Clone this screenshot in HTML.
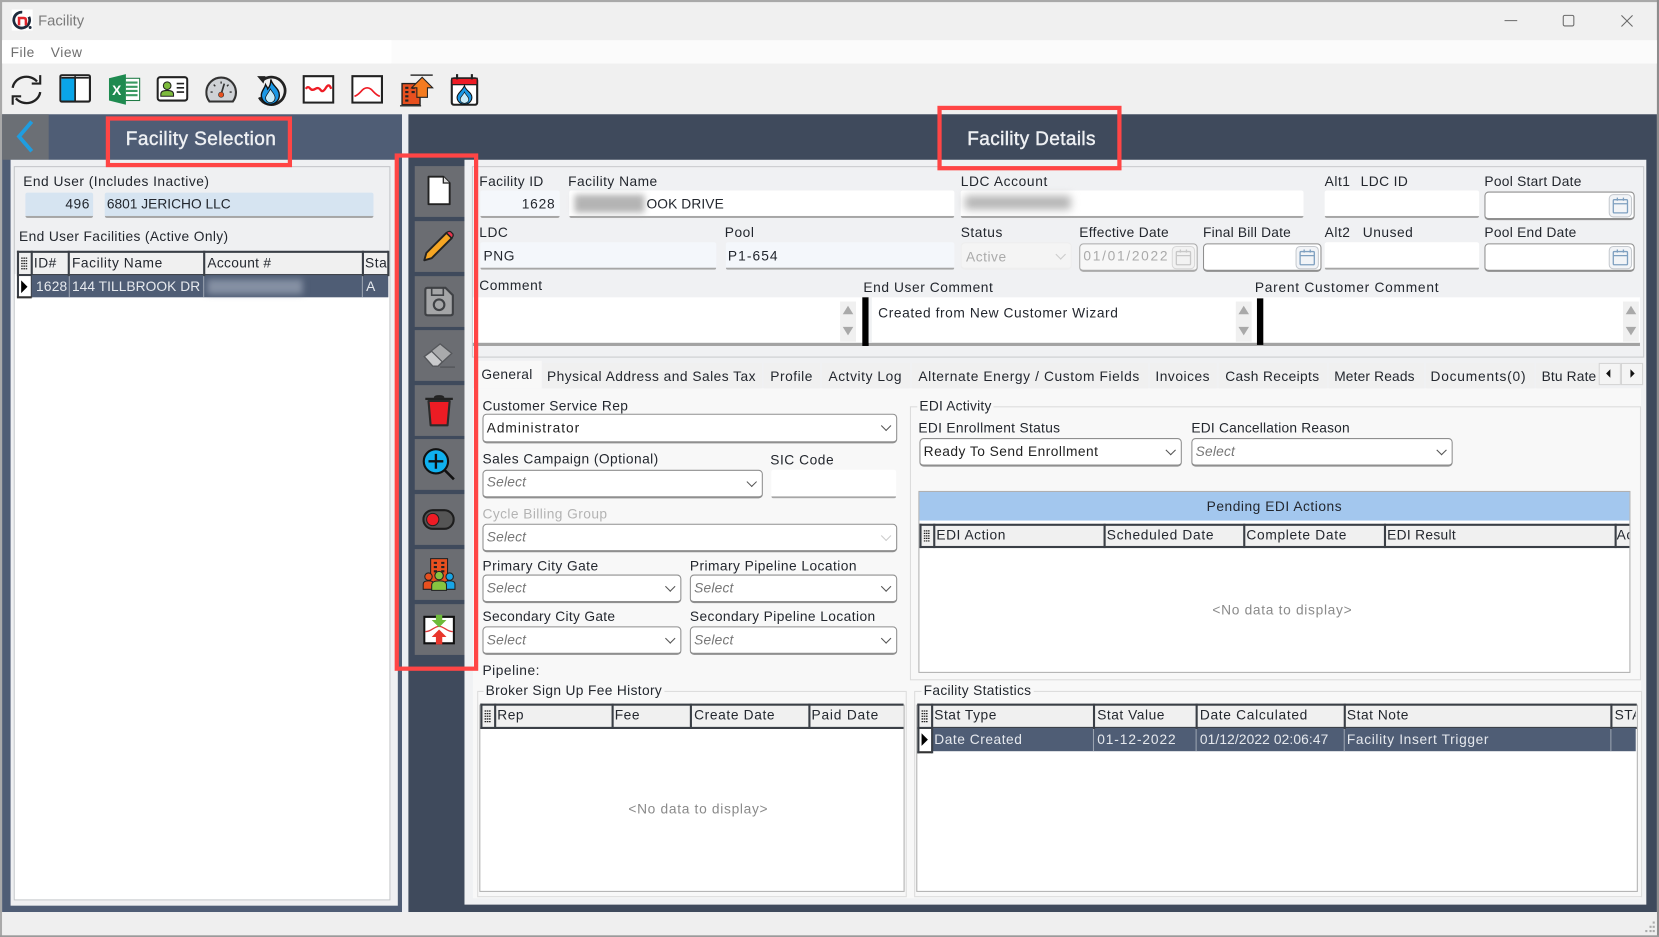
<!DOCTYPE html>
<html><head><meta charset="utf-8"><title>Facility</title>
<style>
html,body{margin:0;padding:0;width:1659px;height:937px;overflow:hidden;background:#f0f0f0}
#r{position:absolute;left:0;top:0;width:1568px;height:886px;overflow:hidden;transform:scale(1.05804);transform-origin:0 0;font:13px/14px "Liberation Sans",sans-serif;letter-spacing:.5px;color:#23272e;background:#f0f0f0}
#r div,#r span,#r svg{position:absolute}
span{white-space:nowrap}
.f{background:#fff;border-bottom:2px solid #a6a6a6;border-radius:2px;box-sizing:border-box}
.b{background:#f4f7fb}
.s{background:#fff;border:1px solid #8f8f8f;border-bottom-width:2px;border-radius:4px;box-sizing:border-box}
.s:after{content:"";position:absolute;right:6px;top:7px;width:6px;height:6px;border-right:1.4px solid #555;border-bottom:1.4px solid #555;transform:rotate(45deg)}
.dis:after{border-color:#ccc}
.d{background:#fff;border:1px solid #8f8f8f;border-bottom-width:2px;border-radius:4px;box-sizing:border-box}
.sel{font-style:italic;color:#777;letter-spacing:.2px}
.hd{background:#f0f0f0;border-top:2px solid #3a3f46;border-bottom:2px solid #3a3f46;box-sizing:border-box}
.v{width:2px;background:#3a3f46}
.vl{width:1px;background:#9aa3b0}
.g{border:1px solid #b0b0b0;box-sizing:border-box;background:#fff}
.gb{border:1px solid #dcdcdc;box-sizing:border-box}
.lg{background:#f8f8f8;padding:0 2px}
.rw{background:#4f5d75}
.w{color:#e6e9ee}
.nd{color:#8a8a8a;letter-spacing:.65px}
.tab{background:#f0f0f0;top:343px;height:24px}
.red{border:4.5px solid #ff4545;box-sizing:border-box}
.btn{left:392px;width:47px;height:48px;background:#6b6d72}
.blur{filter:blur(3px);background:#9a9a9a}
</style></head><body>
<svg width="0" height="0" style="position:absolute"><defs>
<symbol id="cal" viewBox="0 0 24 24"><rect x="1" y="1" width="22" height="22" rx="4" fill="#f2f4f7" stroke="#c4c8cd"/><rect x="5" y="6" width="14" height="13" rx="1" fill="none" stroke="#7fa0c0" stroke-width="1.3"/><path d="M5 10H19M9 4V7M15 4V7" stroke="#7fa0c0" stroke-width="1.3"/></symbol>
<symbol id="cald" viewBox="0 0 24 24"><rect x="1" y="1" width="22" height="22" rx="4" fill="#f2f2f2" stroke="#d8d8d8"/><rect x="5" y="6" width="14" height="13" rx="1" fill="none" stroke="#c8c8c8" stroke-width="1.3"/><path d="M5 10H19M9 4V7M15 4V7" stroke="#c8c8c8" stroke-width="1.3"/></symbol>
<symbol id="gh" viewBox="0 0 12 20"><path d="M3 5H9M3 7.5H9M3 10H9M3 12.5H9M3 15H9" stroke="#222" stroke-width="1.2" stroke-dasharray="1.5 .6"/></symbol>
</defs></svg>
<div id="r">
<!-- window chrome -->
<div style="left:0;top:0;width:1568px;height:2px;background:#a9a9a9"></div>
<div style="left:0;top:0;width:2px;height:886px;background:#a9a9a9"></div>
<div style="left:1566px;top:0;width:2px;height:886px;background:#8d8d8d"></div>
<svg style="left:11px;top:9px" width="20" height="20" viewBox="0 0 20 20"><rect width="20" height="20" fill="#fff"/><circle cx="9.5" cy="10" r="7.5" fill="none" stroke="#1d2a3c" stroke-width="2.6" stroke-dasharray="33 8" transform="rotate(20 9.5 10)"/><path d="M7 15V8H11.5Q13.500 8 13.500 10V15" fill="none" stroke="#e0262e" stroke-width="2.400"/><circle cx="17.500" cy="17" r="1.400" fill="#1d2a3c"/></svg>
<span style="left:36px;top:12px;font-size:14px;color:#7a7a7a;letter-spacing:0">Facility</span>
<svg style="left:1420px;top:12px" width="126" height="16" viewBox="0 0 126 16" fill="none" stroke="#6a6a6a" stroke-width="1"><path d="M2 7.5H14"/><rect x="57.5" y="2.5" width="10" height="10" rx="1.5"/><path d="M112.5 2.5L123 13M123 2.5L112.5 13"/></svg>
<div style="left:2px;top:38px;width:1564px;height:22px;background:#fbfbfb"></div>
<div style="left:2px;top:38px;width:368px;height:22px;background:#fff"></div>
<span style="left:10px;top:43px;color:#6e6e6e">File</span><span style="left:48px;top:43px;color:#6e6e6e">View</span>

<!-- toolbar icons -->
<svg style="left:9px;top:69px" width="32" height="32" viewBox="0 0 32 32" fill="none" stroke="#222" stroke-width="2.2"><path d="M3 14A13 12 0 0 1 26 8"/><path d="M29 2V10H21" stroke-width="2"/><path d="M29 18A13 12 0 0 1 6 24"/><path d="M3 30V22H11" stroke-width="2"/></svg>
<svg style="left:56px;top:70px" width="30" height="28" viewBox="0 0 30 28"><rect x="1" y="1" width="28" height="25" rx="1.5" fill="#fff" stroke="#222" stroke-width="2"/><rect x="2" y="4" width="13" height="21" fill="#0aa5e8"/><path d="M15 2V25M2 3.5H28" stroke="#222" stroke-width="1.6"/></svg>
<svg style="left:102px;top:69px" width="31" height="31" viewBox="0 0 31 31"><rect x="13" y="5" width="17" height="21" fill="#fff" stroke="#1f7a45"/><path d="M17 9H28M17 13H28M17 17H28M17 21H28" stroke="#3a9a62" stroke-width="2"/><path d="M1 5L17 1V30L1 26Z" fill="#1f8a50"/><text x="4" y="21" font-family="Liberation Sans" font-size="13" font-weight="700" fill="#fff">X</text></svg>
<svg style="left:148px;top:71px" width="30" height="26" viewBox="0 0 30 26"><rect x="1" y="2" width="28" height="22" rx="2.5" fill="#fff" stroke="#222" stroke-width="2"/><circle cx="10" cy="10" r="3.6" fill="#7dbb3c" stroke="#222"/><path d="M4 20V18Q4 14.500 10 14.500T16 18V20Z" fill="#7dbb3c" stroke="#222"/><path d="M19 8H26M19 12H26M19 16H26" stroke="#222" stroke-width="1.6"/></svg>
<svg style="left:194px;top:71px" width="30" height="26" viewBox="0 0 30 26"><path d="M4 25A14 14 0 1 1 26 25Z" fill="#cfd2d6" stroke="#333" stroke-width="2"/><path d="M5 16H7M8 9L9.500 10.500M15 6V8M22 9L20.500 10.500M25 16H23" stroke="#333" stroke-width="1.3"/><path d="M15 18L18 8" stroke="#333" stroke-width="1.6"/><circle cx="15" cy="18.500" r="2.500" fill="#e8501f" stroke="#333" stroke-width=".6"/></svg>
<svg style="left:240px;top:69px" width="31" height="32" viewBox="0 0 31 32"><path d="M8 7A13 13 0 1 1 5 23" fill="none" stroke="#222" stroke-width="2.600"/><path d="M3 3L11 3L9 10Z" fill="#222"/><path d="M16 6C17 12 24 14 24 21A8.500 8.500 0 0 1 7 21C7 17 10 15 11 11C12 13 13 14 13 15C15 13 16 10 16 6Z" fill="#1a98e6" stroke="#111" stroke-width="1.300"/><path d="M15.500 15C17 18 20 20 20 23.500A4.500 4.500 0 0 1 11 23.500C11 21 14 19 15.500 15Z" fill="#c8ecfa" stroke="#111" stroke-width=".7"/></svg>
<svg style="left:286px;top:70px" width="30" height="28" viewBox="0 0 30 28"><rect x="1" y="2" width="28" height="25" fill="#fff" stroke="#222" stroke-width="2"/><path d="M3 14Q5 11 7 13.500T12 14T17 15T22 13T27 14" fill="none" stroke="#ee1c25" stroke-width="2.200"/></svg>
<svg style="left:332px;top:70px" width="30" height="28" viewBox="0 0 30 28"><rect x="1" y="2" width="28" height="25" fill="#fff" stroke="#222" stroke-width="2"/><path d="M3 21C9 19 10 13 15 13S21 19 27 21" fill="none" stroke="#ee1c25" stroke-width="1.600"/></svg>
<svg style="left:378px;top:69px" width="32" height="32" viewBox="0 0 32 32"><path d="M10 2H31" stroke="#333" stroke-width="1.400"/><rect x="2" y="10" width="17" height="20" fill="#e8501f" stroke="#222" stroke-width="1.300"/><path d="M5 14H8M11 14H14M5 18H8M11 18H14M5 22H8M5 26H8" stroke="#222" stroke-width="2"/><path d="M21 4L31 14H26V23H16V14H11Z" fill="#f47b20" stroke="#222"/><path d="M0 31H20" stroke="#333" stroke-width="1.300"/></svg>
<svg style="left:425px;top:69px" width="28" height="32" viewBox="0 0 28 32"><rect x="2" y="5" width="24" height="25" rx="2" fill="#fff" stroke="#222" stroke-width="2"/><rect x="2" y="5" width="24" height="6" fill="#ee1c25" stroke="#222" stroke-width="1.200"/><path d="M7 1V6M21 1V6" stroke="#222" stroke-width="2"/><path d="M14 12C15 17 21 18 21 23A7 6.500 0 0 1 7 23C7 19 12 17 14 12Z" fill="#1a98e6" stroke="#111"/><path d="M14 18C15 21 18 22 18 25A4 3.600 0 0 1 10 25C10 22 13 21 14 18Z" fill="#c8ecfa" stroke="#111" stroke-width=".6"/></svg>

<!-- backgrounds -->
<div style="left:2px;top:108px;width:378px;height:754px;background:#4f5d75"></div>
<div style="left:2px;top:108px;width:44px;height:43px;background:#6b6f75"></div>
<svg style="left:14px;top:112px" width="20" height="34" viewBox="0 0 20 34"><path d="M16 3L4 17L16 31" fill="none" stroke="#1f9de0" stroke-width="3.600"/></svg>
<div style="left:380px;top:108px;width:6px;height:754px;background:#eceef2"></div>
<div style="left:386px;top:108px;width:1180px;height:754px;background:#3f4a5c"></div>
<span style="left:90px;top:120px;width:200px;text-align:center;font-size:18px;line-height:22px;letter-spacing:.4px;color:#eef0f3;-webkit-text-stroke:.4px #eef0f3">Facility Selection</span>
<span style="left:875px;top:120px;width:200px;text-align:center;font-size:18px;line-height:22px;letter-spacing:.35px;color:#eef0f3;-webkit-text-stroke:.4px #eef0f3">Facility Details</span>

<!-- left panel -->
<div style="left:10px;top:151px;width:366px;height:705px;background:#eff0f2"></div>
<div style="left:13px;top:157px;width:356px;height:694px;border:1px solid #c4c6c9;box-sizing:border-box"></div>
<span style="left:22px;top:165px;letter-spacing:.45px">End User (Includes Inactive)</span>
<div class="f" style="left:24px;top:182px;width:64px;height:24px;background:#d6e4f1"></div><span style="left:24px;top:186px;width:61px;text-align:right">496</span>
<div class="f" style="left:99px;top:182px;width:254px;height:24px;background:#d6e4f1"></div><span style="left:101px;top:186px;letter-spacing:0">6801 JERICHO LLC</span>
<span style="left:18px;top:217px;letter-spacing:.35px">End User Facilities (Active Only)</span>
<div style="left:14px;top:259px;width:354px;height:591px;background:#fff"></div>
<div class="hd" style="left:16px;top:237px;width:351px;height:24px"></div>
<div class="v" style="left:16px;top:237px;height:44px"></div><div class="v" style="left:29px;top:237px;height:44px"></div>
<svg style="left:17px;top:239px" width="12" height="20"><use href="#gh"/></svg>
<div class="rw" style="left:30px;top:260px;width:337px;height:21px"></div>
<div style="left:18px;top:261px;width:11px;height:20px;background:#fff"></div>
<svg style="left:19px;top:264px" width="8" height="14"><path d="M1 1L7 7L1 13Z" fill="#000"/></svg>
<div style="left:16px;top:280px;width:14px;height:2px;background:#333"></div>
<div class="v" style="left:64px;top:237px;height:24px"></div><div class="v" style="left:192px;top:237px;height:24px"></div><div class="v" style="left:342px;top:237px;height:24px"></div>
<div class="v" style="left:366px;top:237px;height:24px"></div>
<div class="vl" style="left:65px;top:261px;height:20px"></div><div class="vl" style="left:192px;top:261px;height:20px"></div><div class="vl" style="left:342px;top:261px;height:20px"></div>
<span style="left:32px;top:242px">ID#</span><span style="left:68px;top:242px;letter-spacing:.55px">Facility Name</span><span style="left:196px;top:242px;letter-spacing:.3px">Account #</span><span style="left:345px;top:242px">Sta</span>
<span class="w" style="left:34px;top:264px;letter-spacing:.2px">1628</span>
<span class="w" style="left:68px;top:264px;width:122px;overflow:hidden;letter-spacing:.05px">144 TILLBROOK DRIVE</span>
<div style="left:196px;top:264px;width:90px;height:14px;background:#8590a3;filter:blur(3px)"></div>
<span class="w" style="left:346px;top:264px">A</span>

<!-- side strip -->
<div class="btn" style="top:157px"></div><div class="btn" style="top:209px"></div><div class="btn" style="top:261px"></div><div class="btn" style="top:312px"></div><div class="btn" style="top:364px"></div><div class="btn" style="top:415px"></div><div class="btn" style="top:467px"></div><div class="btn" style="top:519px"></div><div class="btn" style="top:571px"></div>
<svg style="left:402px;top:165px" width="26" height="30" viewBox="0 0 26 30"><path d="M3 2H17L23 8V28H3Z" fill="#fff" stroke="#222" stroke-width="1.800" stroke-linejoin="round"/><path d="M17 2V8H23" fill="#ddd" stroke="#222" stroke-width="1.200"/></svg>
<svg style="left:399px;top:216px" width="32" height="32" viewBox="0 0 32 32"><path d="M23 4L28 9L9 28L2 30L4 23Z" fill="#f6a623" stroke="#222" stroke-width="1.800" stroke-linejoin="round"/><path d="M23 4Q25 2 27 3L29 5Q30 7 28 9Z" fill="#e8344e" stroke="#222" stroke-width="1.200"/></svg>
<svg style="left:400px;top:270px" width="30" height="30" viewBox="0 0 30 30"><path d="M2 4Q2 2 4 2H21L28 9V26Q28 28 26 28H4Q2 28 2 26Z" fill="#a4a5a7" stroke="#3f4145" stroke-width="2"/><path d="M8 2V9H19V2" fill="none" stroke="#3f4145" stroke-width="1.500"/><circle cx="15" cy="18" r="5" fill="none" stroke="#3f4145" stroke-width="2"/></svg>
<svg style="left:399px;top:322px" width="32" height="28" viewBox="0 0 32 28"><path d="M2 15L17 3L28 12L15 24H10Z" fill="#a9aaac" stroke="#55575b" stroke-width="1.200"/><path d="M2 15L10 24H15L19 20L9 10Z" fill="#c9cacc" stroke="#55575b" stroke-width="1.200"/><path d="M17 25H31" stroke="#55575b" stroke-width="1.500"/></svg>
<svg style="left:401px;top:372px" width="28" height="32" viewBox="0 0 28 32"><path d="M1 5H27" stroke="#222" stroke-width="2.200"/><path d="M9 4Q9 1.500 14 1.500T19 4" fill="#222"/><path d="M4 7H24L22 30H6Z" fill="#ed1c24" stroke="#2b2b2b" stroke-width="2" stroke-linejoin="round"/></svg>
<svg style="left:399px;top:423px" width="32" height="32" viewBox="0 0 32 32"><path d="M20 20L30 30" stroke="#111" stroke-width="2.400"/><circle cx="13" cy="13" r="11.500" fill="#0fb0ee" stroke="#111" stroke-width="2"/><path d="M13 6V20M6 13H20" stroke="#111" stroke-width="2.200"/></svg>
<svg style="left:399px;top:481px" width="31" height="20" viewBox="0 0 31 20"><rect x="1.200" y="1.200" width="28.600" height="17.600" rx="8.800" fill="#555" stroke="#1d1d1d" stroke-width="2"/><circle cx="10" cy="10" r="5.800" fill="#ee1c25" stroke="#222"/></svg>
<svg style="left:399px;top:527px" width="32" height="33" viewBox="0 0 32 33"><rect x="8" y="1" width="16" height="24" fill="#e8501f" stroke="#222"/><path d="M11 5H14M18 5H21M11 9H14M18 9H21M11 13H14M18 13H21" stroke="#222" stroke-width="2"/><circle cx="6" cy="18" r="3.500" fill="#e8501f" stroke="#222"/><path d="M1 30V25Q1 22 6 22T11 25V30Z" fill="#e8501f" stroke="#222"/><circle cx="26" cy="18" r="3.500" fill="#18a5e6" stroke="#222"/><path d="M21 30V25Q21 22 26 22T31 25V30Z" fill="#18a5e6" stroke="#222"/><circle cx="16" cy="17" r="4" fill="#86c440" stroke="#222"/><path d="M9 31V26Q9 22 16 22T23 26V31Z" fill="#86c440" stroke="#222"/></svg>
<svg style="left:400px;top:580px" width="30" height="30" viewBox="0 0 30 30"><rect x="1" y="3" width="28" height="25" fill="#fff" stroke="#111" stroke-width="2"/><path d="M2 17C8 17 10 12 15 12S22 17 28 17" fill="none" stroke="#e03a3a" stroke-width="1.200"/><path d="M12 1H18V6H22L15 13L8 6H12Z" fill="#6ebb3a"/><path d="M15 15L22 22H18V29H12V22H8Z" fill="#e8362c"/></svg>

<!-- right panel -->
<div style="left:439px;top:151px;width:1117px;height:704px;background:#f0f1f3"></div>
<div style="left:446px;top:157px;width:1108px;height:181px;border:1px solid #c9cbce;box-sizing:border-box"></div>
<span style="left:453px;top:165px;letter-spacing:.35px">Facility ID</span><span style="left:537px;top:165px;letter-spacing:.45px">Facility Name</span><span style="left:908px;top:165px;letter-spacing:.6px">LDC Account</span><span style="left:1252px;top:165px">Alt1</span><span style="left:1286px;top:165px;letter-spacing:.4px">LDC ID</span><span style="left:1403px;top:165px;letter-spacing:.25px">Pool Start Date</span>
<div class="f b" style="left:454px;top:180px;width:75px;height:26px"></div><span style="left:454px;top:186px;width:71px;text-align:right;letter-spacing:.75px">1628</span>
<div class="f" style="left:538px;top:180px;width:364px;height:26px"></div>
<div class="blur" style="left:543px;top:184px;width:66px;height:17px;background:#b4b4b4"></div><span style="left:611px;top:186px;letter-spacing:.1px">OOK DRIVE</span>
<div class="f" style="left:908px;top:180px;width:324px;height:26px"></div><div class="blur" style="left:912px;top:185px;width:100px;height:13px;background:#b4b4b4;filter:blur(4px)"></div>
<div class="f" style="left:1252px;top:180px;width:146px;height:26px"></div>
<div class="d" style="left:1403px;top:181px;width:142px;height:27px"></div><svg style="left:1520px;top:183px" width="23" height="23"><use href="#cal"/></svg>

<span style="left:453px;top:213px">LDC</span><span style="left:685px;top:213px">Pool</span><span style="left:908px;top:213px">Status</span><span style="left:1020px;top:213px;letter-spacing:.3px">Effective Date</span><span style="left:1137px;top:213px;letter-spacing:.2px">Final Bill Date</span><span style="left:1252px;top:213px">Alt2</span><span style="left:1288px;top:213px">Unused</span><span style="left:1403px;top:213px;letter-spacing:.25px">Pool End Date</span>
<div class="f b" style="left:454px;top:229px;width:223px;height:26px"></div><span style="left:457px;top:235px">PNG</span>
<div class="f b" style="left:686px;top:229px;width:216px;height:26px"></div><span style="left:688px;top:235px;letter-spacing:1px">P1-654</span>
<div class="s dis" style="left:908px;top:229px;width:105px;height:26px;background:#f4f4f4;border-color:#eee"></div><span style="left:913px;top:236px;color:#aaa">Active</span>
<div class="d" style="left:1020px;top:230px;width:112px;height:27px;background:#f7f7f7;border-color:#aaa"></div><span style="left:1024px;top:235px;color:#aaa;letter-spacing:1.600px">01/01/2022</span><svg style="left:1107px;top:232px" width="23" height="23"><use href="#cald"/></svg>
<div class="d" style="left:1137px;top:230px;width:112px;height:27px"></div><svg style="left:1224px;top:232px" width="23" height="23"><use href="#cal"/></svg>
<div class="f" style="left:1252px;top:229px;width:146px;height:26px"></div>
<div class="d" style="left:1403px;top:230px;width:142px;height:27px"></div><svg style="left:1520px;top:232px" width="23" height="23"><use href="#cal"/></svg>

<span style="left:453px;top:263px">Comment</span><span style="left:816px;top:265px;letter-spacing:.55px">End User Comment</span><span style="left:1186px;top:265px;letter-spacing:.7px">Parent Customer Comment</span>
<div style="left:447px;top:281px;width:1103px;height:43px;background:#fff"></div>
<div style="left:447px;top:324px;width:1103px;height:3px;background:#a3a3a3"></div>
<div style="left:794px;top:285px;width:15px;height:38px;background:#f0f0f0"></div>
<div style="left:1168px;top:285px;width:15px;height:38px;background:#f0f0f0"></div>
<div style="left:1534px;top:285px;width:15px;height:38px;background:#f0f0f0"></div>
<div style="left:815px;top:281px;width:6px;height:46px;background:#000"></div>
<div style="left:1188px;top:282px;width:6px;height:44px;background:#000"></div>
<div style="left:821px;top:281px;width:3px;height:43px;background:#f0f1f3"></div>
<svg style="left:796px;top:288px" width="11" height="30" fill="#a9a9a9"><path d="M5.500 1L10.500 9H.5ZM.5 21H10.500L5.500 29Z"/></svg>
<svg style="left:1170px;top:288px" width="11" height="30" fill="#a9a9a9"><path d="M5.500 1L10.500 9H.5ZM.5 21H10.500L5.500 29Z"/></svg>
<svg style="left:1536px;top:288px" width="11" height="30" fill="#a9a9a9"><path d="M5.500 1L10.500 9H.5ZM.5 21H10.500L5.500 29Z"/></svg>
<span style="left:830px;top:289px;letter-spacing:.55px">Created from New Customer Wizard</span>

<!-- tabs -->
<div style="left:447px;top:367px;width:1104px;height:482px;background:#f8f8f8"></div>
<div style="left:451px;top:341px;width:61px;height:26px;background:#f8f8f8"></div>
<span style="left:455px;top:347px;letter-spacing:.3px">General</span>
<div class="tab" style="left:513px;width:207px"></div><div class="tab" style="left:722px;width:53px"></div><div class="tab" style="left:777px;width:83px"></div><div class="tab" style="left:862px;width:223px"></div><div class="tab" style="left:1087px;width:63px"></div><div class="tab" style="left:1152px;width:102px"></div><div class="tab" style="left:1256px;width:90px"></div><div class="tab" style="left:1348px;width:102px"></div><div class="tab" style="left:1452px;width:60px"></div>
<span style="left:517px;top:349px;letter-spacing:.45px">Physical Address and Sales Tax</span><span style="left:728px;top:349px">Profile</span><span style="left:783px;top:349px;letter-spacing:.55px">Actvity Log</span><span style="left:868px;top:349px;letter-spacing:.58px">Alternate Energy / Custom Fields</span><span style="left:1092px;top:349px">Invoices</span><span style="left:1158px;top:349px;letter-spacing:.35px">Cash Receipts</span><span style="left:1261px;top:349px;letter-spacing:.15px">Meter Reads</span><span style="left:1352px;top:349px;letter-spacing:.75px">Documents(0)</span><span style="left:1457px;top:349px;letter-spacing:.15px">Btu Rate</span>
<div style="left:1511px;top:343px;width:21px;height:21px;background:#f4f4f4;border:1px solid #d4d4d4;box-sizing:border-box"></div>
<div style="left:1532px;top:343px;width:21px;height:21px;background:#f4f4f4;border:1px solid #d4d4d4;box-sizing:border-box"></div>
<svg style="left:1517px;top:348px" width="30" height="10"><path d="M5 1V9L1 5ZM24 1V9L28 5Z" fill="#111"/></svg>

<!-- general left -->
<span style="left:456px;top:377px;letter-spacing:.35px">Customer Service Rep</span>
<div class="s" style="left:456px;top:391px;width:392px;height:28px"></div><span style="left:460px;top:398px;color:#222;letter-spacing:.9px">Administrator</span>
<span style="left:456px;top:427px;letter-spacing:.42px">Sales Campaign (Optional)</span><span style="left:728px;top:428px">SIC Code</span>
<div class="s" style="left:456px;top:444px;width:265px;height:27px"></div><span class="sel" style="left:460px;top:449px">Select</span>
<div class="f" style="left:729px;top:444px;width:118px;height:27px"></div>
<span style="left:456px;top:479px;color:#b3b3b3;letter-spacing:.4px">Cycle Billing Group</span>
<div class="s dis" style="left:456px;top:495px;width:392px;height:27px"></div><span class="sel" style="left:460px;top:501px">Select</span>
<span style="left:456px;top:528px;letter-spacing:.42px">Primary City Gate</span><span style="left:652px;top:528px;letter-spacing:.42px">Primary Pipeline Location</span>
<div class="s" style="left:456px;top:543px;width:188px;height:27px"></div><span class="sel" style="left:460px;top:549px">Select</span>
<div class="s" style="left:652px;top:543px;width:196px;height:27px"></div><span class="sel" style="left:656px;top:549px">Select</span>
<span style="left:456px;top:576px;letter-spacing:.3px">Secondary City Gate</span><span style="left:652px;top:576px;letter-spacing:.4px">Secondary Pipeline Location</span>
<div class="s" style="left:456px;top:592px;width:188px;height:27px"></div><span class="sel" style="left:460px;top:598px">Select</span>
<div class="s" style="left:652px;top:592px;width:196px;height:27px"></div><span class="sel" style="left:656px;top:598px">Select</span>
<span style="left:456px;top:627px">Pipeline:</span>

<!-- EDI -->
<div class="gb" style="left:860px;top:384px;width:691px;height:259px"></div>
<span class="lg" style="left:867px;top:377px;letter-spacing:.2px">EDI Activity</span>
<span style="left:868px;top:398px;letter-spacing:.3px">EDI Enrollment Status</span><span style="left:1126px;top:398px;letter-spacing:.2px">EDI Cancellation Reason</span>
<div class="s" style="left:869px;top:414px;width:248px;height:27px"></div><span style="left:873px;top:420px;color:#222;letter-spacing:.45px">Ready To Send Enrollment</span>
<div class="s" style="left:1126px;top:414px;width:247px;height:27px"></div><span class="sel" style="left:1130px;top:420px">Select</span>
<div style="left:868px;top:464px;width:673px;height:172px;border:1px solid #b0b0b0;box-sizing:border-box;background:#fff"></div>
<div style="left:869px;top:465px;width:671px;height:27px;background:#a3c7ee"></div>
<span style="left:868px;top:472px;width:673px;text-align:center">Pending EDI Actions</span>
<div class="hd" style="left:869px;top:495px;width:671px;height:23px"></div>
<div class="v" style="left:869px;top:495px;height:23px"></div><div class="v" style="left:882px;top:495px;height:23px"></div><div class="v" style="left:1043px;top:495px;height:23px"></div><div class="v" style="left:1175px;top:495px;height:23px"></div><div class="v" style="left:1308px;top:495px;height:23px"></div><div class="v" style="left:1526px;top:495px;height:23px"></div>
<svg style="left:870px;top:497px" width="12" height="19"><use href="#gh"/></svg>
<span style="left:885px;top:499px">EDI Action</span><span style="left:1046px;top:499px;letter-spacing:.65px">Scheduled Date</span><span style="left:1178px;top:499px;letter-spacing:.65px">Complete Date</span><span style="left:1311px;top:499px;letter-spacing:.3px">EDI Result</span><span style="left:1528px;top:499px;width:12px;overflow:hidden">Action</span>
<span class="nd" style="left:1112px;top:570px;width:200px;text-align:center">&lt;No data to display&gt;</span>

<!-- Broker -->
<div class="gb" style="left:451px;top:653px;width:406px;height:195px"></div>
<span class="lg" style="left:457px;top:646px;letter-spacing:.33px">Broker Sign Up Fee History</span>
<div class="g" style="left:453px;top:666px;width:402px;height:177px"></div>
<div class="hd" style="left:454px;top:665px;width:400px;height:24px"></div>
<div class="v" style="left:454px;top:665px;height:24px"></div><div class="v" style="left:467px;top:665px;height:24px"></div><div class="v" style="left:578px;top:665px;height:24px"></div><div class="v" style="left:652px;top:665px;height:24px"></div><div class="v" style="left:764px;top:665px;height:24px"></div>
<svg style="left:455px;top:667px" width="12" height="20"><use href="#gh"/></svg>
<span style="left:470px;top:669px">Rep</span><span style="left:581px;top:669px">Fee</span><span style="left:656px;top:669px;letter-spacing:.6px">Create Date</span><span style="left:767px;top:669px;letter-spacing:.75px">Paid Date</span>
<span class="nd" style="left:560px;top:758px;width:200px;text-align:center">&lt;No data to display&gt;</span>

<!-- Stats -->
<div class="gb" style="left:864px;top:653px;width:688px;height:195px"></div>
<span class="lg" style="left:871px;top:646px;letter-spacing:.3px">Facility Statistics</span>
<div class="g" style="left:866px;top:666px;width:682px;height:177px"></div>
<div class="hd" style="left:867px;top:665px;width:680px;height:24px"></div>
<div class="rw" style="left:881px;top:688px;width:665px;height:22px"></div>
<div style="left:868px;top:689px;width:12px;height:21px;background:#fff"></div>
<svg style="left:870px;top:692px" width="8" height="14"><path d="M1 1L7 7L1 13Z" fill="#000"/></svg>
<div style="left:867px;top:710px;width:14px;height:2px;background:#333"></div>
<div class="v" style="left:867px;top:665px;height:47px"></div><div class="v" style="left:880px;top:665px;height:47px"></div><div class="v" style="left:1033px;top:665px;height:24px"></div><div class="v" style="left:1130px;top:665px;height:24px"></div><div class="v" style="left:1270px;top:665px;height:24px"></div><div class="v" style="left:1522px;top:665px;height:24px"></div>
<div class="vl" style="left:1033px;top:689px;height:21px"></div><div class="vl" style="left:1130px;top:689px;height:21px"></div><div class="vl" style="left:1270px;top:689px;height:21px"></div><div class="vl" style="left:1522px;top:689px;height:21px"></div>
<svg style="left:868px;top:667px" width="12" height="20"><use href="#gh"/></svg>
<span style="left:883px;top:669px">Stat Type</span><span style="left:1037px;top:669px">Stat Value</span><span style="left:1134px;top:669px;letter-spacing:.65px">Date Calculated</span><span style="left:1273px;top:669px">Stat Note</span><span style="left:1526px;top:669px;width:20px;overflow:hidden">STAT</span>
<span class="w" style="left:883px;top:692px">Date Created</span><span class="w" style="left:1037px;top:692px;letter-spacing:.85px">01-12-2022</span><span class="w" style="left:1134px;top:692px;letter-spacing:.12px">01/12/2022 02:06:47</span><span class="w" style="left:1273px;top:692px;letter-spacing:.6px">Facility Insert Trigger</span>

<!-- red boxes -->
<div class="red" style="left:100px;top:110px;width:176px;height:48px"></div>
<div class="red" style="left:886px;top:100px;width:174px;height:61px"></div>
<div class="red" style="left:373px;top:145px;width:79px;height:489px"></div>

<!-- status bar -->
<div style="left:2px;top:862px;width:1564px;height:22px;background:#efefef"></div>
<div style="left:0;top:884px;width:1568px;height:2px;background:#9a9a9a"></div>
<svg style="left:1552px;top:870px" width="13" height="13" fill="#aaa"><path d="M10 1h2v2h-2zM7 5h2v2H7zM10 5h2v2h-2zM3 9h2v2H3zM7 9h2v2H7zM10 9h2v2h-2z"/></svg>
</div>
</body></html>
